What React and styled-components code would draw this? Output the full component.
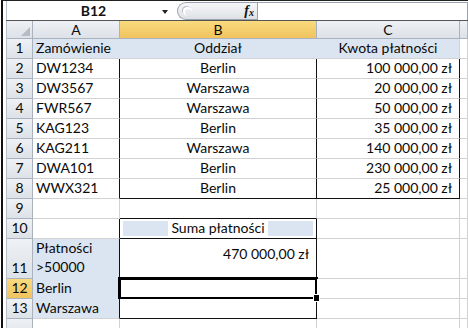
import React from 'react';
import styled, { createGlobalStyle } from 'styled-components';

const GlobalStyle = createGlobalStyle`
  html, body { margin: 0; padding: 0; background: #fff; }
  body { font-family: Lato, "Liberation Sans", sans-serif; overflow: hidden; }
`;

const BLUE = '#dbe5f1';
const GRID = '#d2d2d2';
const INK = '#111';

const Window = styled.div`
  width: 467px;
  height: 328px;
  margin-left: 1px;
  box-sizing: border-box;
  border-left: 2px solid #111;
  border-top: 1px solid #222;
  padding-left: 3px;
  display: flex;
  flex-direction: column;
  overflow: hidden;
`;

const FormulaBar = styled.div`
  height: 21px;
  display: flex;
  align-items: stretch;
  border-bottom: 1px solid #555;
  box-sizing: border-box;
`;

const NameBox = styled.div`
  width: 167px;
  display: flex;
  align-items: center;
  box-sizing: border-box;
  border-left: 1px solid #b9c0c8;
  padding-right: 5px;
  font-size: 14px;
  font-weight: 700;
  color: #111;
`;

const NameText = styled.span`
  flex: 1;
  text-align: center;
  padding-left: 18px;
`;

const Arrow = styled.span`
  width: 0;
  height: 0;
  border-left: 3.5px solid transparent;
  border-right: 3.5px solid transparent;
  border-top: 4px solid #222;
  margin-top: 2px;
`;

const Capsule = styled.div`
  width: 80px;
  margin: 1px 0 0 4px;
  height: 18px;
  box-sizing: border-box;
  border: 1px solid #9aa3ad;
  border-right: none;
  border-radius: 10px 0 0 10px;
  background: linear-gradient(#f6f7f9, #dde1e6);
  display: flex;
  align-items: center;
  justify-content: space-between;
  padding: 0 3px 0 5px;
`;

const Grip = styled.span`
  width: 9px;
  height: 9px;
  border-radius: 50%;
  border-top: 2px solid #fff;
  border-left: 2px solid #fff;
  box-sizing: border-box;
  box-shadow: -1px -1px 0 #b8bfc7;
`;

const Fx = styled.span`
  font-family: "Liberation Serif", serif;
  font-style: italic;
  font-weight: 700;
  font-size: 14px;
  color: #111;
  line-height: 1;
  sub { font-size: 10px; vertical-align: -1px; }
`;

const FormulaInput = styled.div`
  flex: 1;
  margin-top: 1px;
  border: 1px solid #9aa3ad;
  border-bottom: none;
  background: #fff;
`;

const Gap = styled.div`
  height: 5px;
`;

const Sheet = styled.div`
  display: grid;
  grid-template-columns: 26px 87px 197px 143px 1fr;
  grid-template-rows: 18px repeat(10, 20px) 40px 20px 20px 20px;
  border-left: 1px solid #b9c0c8;
  font-size: 14px;
  color: #0a0a0a;
`;

const Head = styled.div`
  box-sizing: border-box;
  display: flex;
  justify-content: center;
  align-items: ${p => (p.$bottom ? 'flex-end' : 'center')};
  padding-bottom: ${p => (p.$bottom ? '2px' : '0')};
  border-right: 1px solid #a9b2bd;
  border-bottom: 1px solid #a9b2bd;
  background: ${p =>
    p.$active
      ? 'linear-gradient(#f9db7e, #f1c35e)'
      : 'linear-gradient(#eef1f5, #dde2e8)'};
  line-height: 16px;
  position: relative;
`;

const Corner = styled(Head)`
  svg { position: absolute; right: 2px; bottom: 2px; }
`;

const Cell = styled.div`
  box-sizing: border-box;
  position: relative;
  display: flex;
  align-items: ${p => (p.$top ? 'flex-start' : 'flex-end')};
  justify-content: ${p =>
    p.$align === 'center' ? 'center' : p.$align === 'right' ? 'flex-end' : 'flex-start'};
  padding: ${p => (p.$top ? '6px' : '0')} ${p => (p.$align === 'right' ? '7px' : '3px')} 2px 3px;
  background: ${p => p.$fill || '#fff'};
  border-right: 1px solid ${p => p.$r || GRID};
  border-bottom: 1px solid ${p => p.$b || GRID};
  line-height: 17px;
  white-space: pre;
`;

const Stacked = styled.div`
  display: flex;
  flex-direction: column;
  line-height: 19px;
`;

const Band = styled.div`
  flex: 1;
  align-self: stretch;
  margin: 2px 0 0;
  background: ${BLUE};
  display: flex;
  justify-content: center;
`;

const BandLabel = styled.span`
  background: #fff;
  padding: 0 3px;
  display: flex;
  align-items: flex-end;
`;

const Selected = styled(Cell)`
  &::after {
    content: '';
    position: absolute;
    left: -2px;
    right: -2px;
    top: -2px;
    bottom: -2px;
    border: 3px solid #000;
    pointer-events: none;
  }
`;

const Handle = styled.span`
  position: absolute;
  right: -4px;
  bottom: -4px;
  width: 5px;
  height: 6px;
  background: #000;
  border: 1px solid #fff;
  z-index: 2;
`;

const rows = [
  ['DW1234', 'Berlin', '100 000,00 zł'],
  ['DW3567', 'Warszawa', '20 000,00 zł'],
  ['FWR567', 'Warszawa', '50 000,00 zł'],
  ['KAG123', 'Berlin', '35 000,00 zł'],
  ['KAG211', 'Warszawa', '140 000,00 zł'],
  ['DWA101', 'Berlin', '230 000,00 zł'],
  ['WWX321', 'Berlin', '25 000,00 zł'],
];

export default function App() {
  return (
    <Window>
      <GlobalStyle />
      <FormulaBar>
        <NameBox>
          <NameText>B12</NameText>
          <Arrow />
        </NameBox>
        <Capsule>
          <Grip />
          <Fx>f<sub>x</sub></Fx>
        </Capsule>
        <FormulaInput />
      </FormulaBar>
      <Gap />
      <Sheet>
        <Corner>
          <svg width="9" height="9" viewBox="0 0 9 9">
            <polygon points="9,0 9,9 0,9" fill="#b5bcc4" />
          </svg>
        </Corner>
        <Head>A</Head>
        <Head $active>B</Head>
        <Head>C</Head>
        <Head />

        <Head $bottom>1</Head>
        <Cell $fill={BLUE} $r={BLUE}>Zamówienie</Cell>
        <Cell $fill={BLUE} $r={BLUE} $align="center">Oddział</Cell>
        <Cell $fill={BLUE} $align="center">Kwota płatności</Cell>
        <Cell />

        {rows.map(([code, city, amount], i) => {
          const last = i === rows.length - 1;
          return (
            <React.Fragment key={code}>
              <Head $bottom>{i + 2}</Head>
              <Cell $r={INK}>{code}</Cell>
              <Cell $r={INK} $b={last ? INK : GRID} $align="center">{city}</Cell>
              <Cell $r={INK} $b={last ? INK : GRID} $align="right">{amount}</Cell>
              <Cell />
            </React.Fragment>
          );
        })}

        <Head $bottom>9</Head>
        <Cell />
        <Cell $b={INK} />
        <Cell />
        <Cell />

        <Head $bottom>10</Head>
        <Cell $r={INK} />
        <Cell $r={INK} $b={INK}>
          <Band>
            <BandLabel>Suma płatności</BandLabel>
          </Band>
        </Cell>
        <Cell />
        <Cell />

        <Head $bottom>11</Head>
        <Cell $fill={BLUE} $r={INK} $b={BLUE}>
          <Stacked>
            <span>Płatności</span>
            <span>&gt;50000</span>
          </Stacked>
        </Cell>
        <Cell $r={INK} $align="right" $top>470 000,00 zł</Cell>
        <Cell />
        <Cell />

        <Head $bottom $active>12</Head>
        <Cell $fill={BLUE} $r={INK} $b={BLUE}>Berlin</Cell>
        <Selected $r={INK}>
          <Handle />
        </Selected>
        <Cell />
        <Cell />

        <Head $bottom>13</Head>
        <Cell $fill={BLUE} $r={INK}>Warszawa</Cell>
        <Cell $r={INK} $b={INK} />
        <Cell />
        <Cell />

        <Head />
        <Cell />
        <Cell />
        <Cell />
        <Cell />
      </Sheet>
    </Window>
  );
}
